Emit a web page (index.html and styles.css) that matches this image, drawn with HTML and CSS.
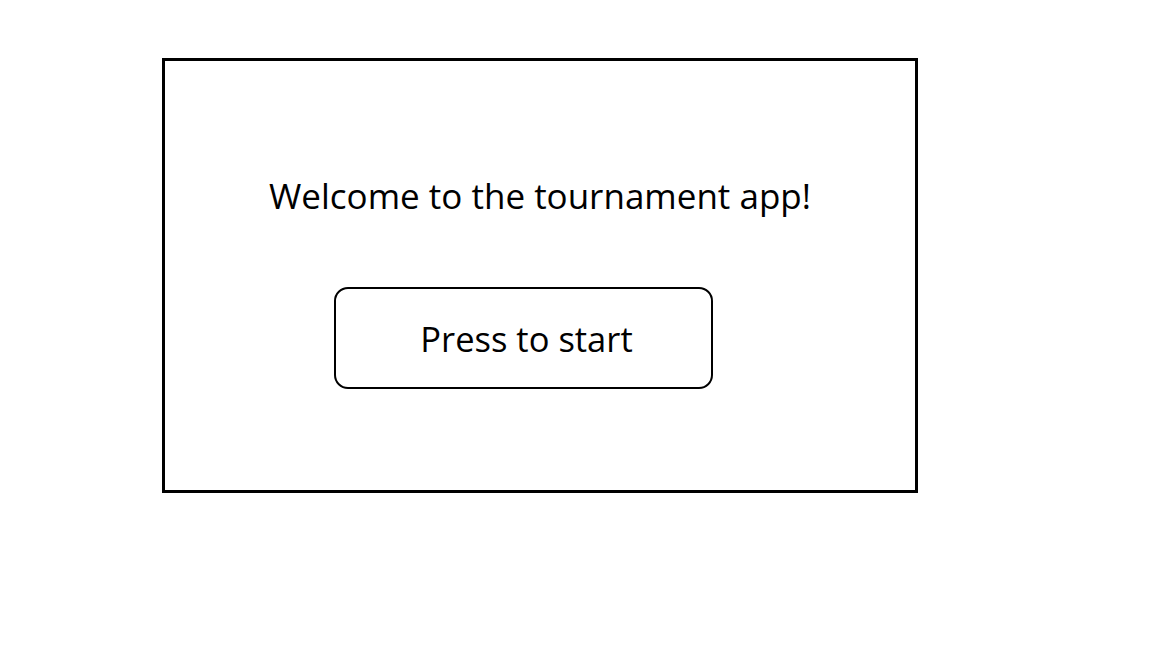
FILE: index.html
```html
<!DOCTYPE html>
<html>
<head>
<meta charset="utf-8">
<link rel="stylesheet" href="styles.css">
</head>
<body>
<main class="frame">
  <h1 class="title">Welcome to the tournament app!</h1>
  <button class="start">Press to start</button>
</main>
</body>
</html>
```

FILE: styles.css
```css
html, body {
  margin: 0;
  padding: 0;
  background: #fff;
}
body {
  font-family: "Open Sans", "Noto Sans", sans-serif;
  color: #000;
}
.frame {
  box-sizing: border-box;
  width: 756px;
  height: 435px;
  margin: 58px 0 0 162px;
  border: 3px solid #000;
  display: flex;
  flex-direction: column;
  align-items: flex-start;
}
.title {
  align-self: stretch;
  margin: 115px 0 0;
  font-size: 35px;
  font-weight: 400;
  line-height: 40px;
  text-align: center;
}
.start {
  box-sizing: border-box;
  width: 379px;
  height: 102px;
  margin: 71px 0 0 169px;
  border: 2px solid #000;
  border-radius: 14px;
  background: #fff;
  font-family: inherit;
  font-size: 34.5px;
  color: #000;
  display: flex;
  align-items: center;
  justify-content: center;
  padding: 0 0 0 6px;
}
```
